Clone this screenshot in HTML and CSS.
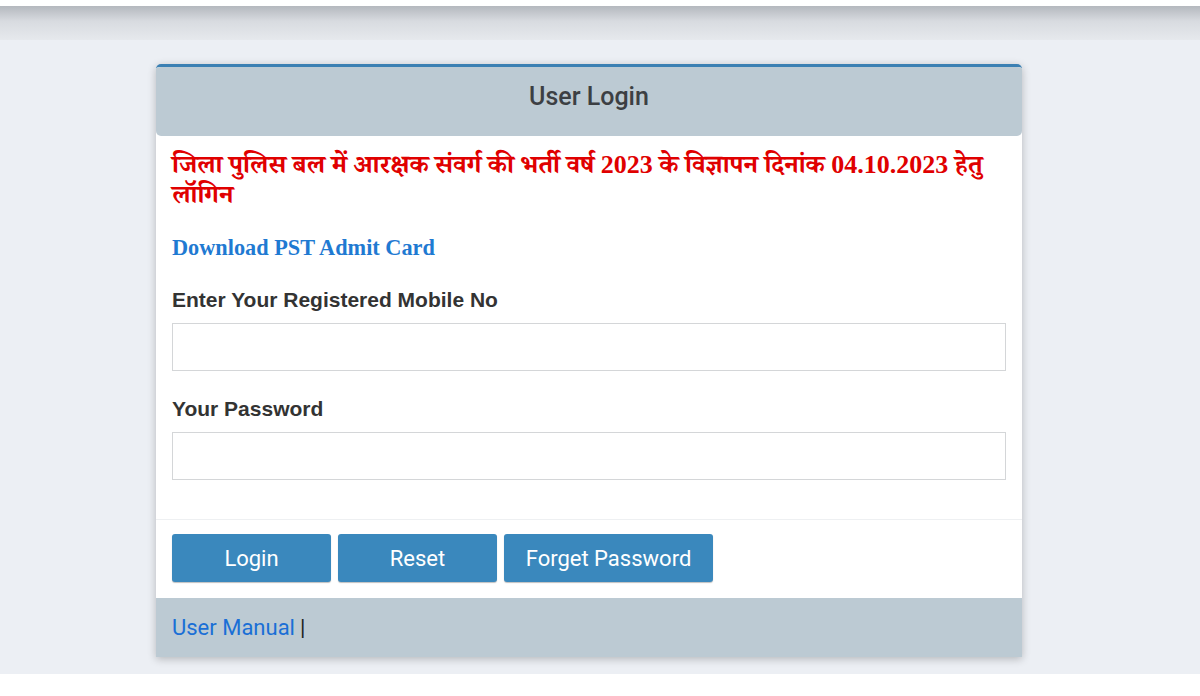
FILE: index.html
```html
<!DOCTYPE html>
<html lang="hi">
<head>
<meta charset="utf-8">
<title>User Login</title>
<link rel="stylesheet" href="styles.css">
</head>
<body>
<div class="page">
  <div class="topbar"></div>
  <div class="shade"></div>
  <div class="wrap">
    <div class="card">
      <div class="card-head">User Login</div>
      <div class="card-body">
        <h3 class="notice">जिला पुलिस बल में आरक्षक संवर्ग की भर्ती वर्ष 2023 के विज्ञापन दिनांक 04.10.2023 हेतु लॉगिन</h3>
        <a class="admit" href="#">Download PST Admit Card</a>
        <label class="lbl">Enter Your Registered Mobile No</label>
        <input class="field" type="text">
        <label class="lbl">Your Password</label>
        <input class="field" type="password">
      </div>
      <div class="card-actions">
        <button class="btn btn-std">Login</button>
        <button class="btn btn-std">Reset</button>
        <button class="btn btn-wide">Forget Password</button>
      </div>
      <div class="card-foot"><a class="manual" href="#">User Manual</a> |</div>
    </div>
  </div>
</div>
</body>
</html>
```

FILE: styles.css
```css
html, body {
  margin: 0;
  padding: 0;
  background: #ffffff;
}
.page {
  background: #eceff4;
  height: 674px;
  overflow: hidden;
}
.topbar {
  height: 6px;
  background: #ffffff;
}
.shade {
  height: 34px;
  background: linear-gradient(#b4b8be 0%, #d8dbe0 45%, #e6e9ed 100%);
}
.wrap {
  padding-top: 24px;
  padding-left: 156px;
}
.card {
  width: 866px;
  background: #ffffff;
  border-top: 3px solid #3b80b3;
  border-radius: 5px 5px 0 0;
  box-shadow: 0 2px 8px rgba(0, 0, 0, 0.24);
  overflow: hidden;
}
.card-head {
  box-sizing: border-box;
  height: 69px;
  padding-bottom: 11px;
  background: #bccad3;
  display: flex;
  align-items: center;
  justify-content: center;
  font-family: Roboto, "Liberation Sans", sans-serif;
  font-size: 25px;
  font-weight: 500;
  color: #3c3f43;
  border-radius: 0 0 5px 5px;
}
.card-body {
  padding: 14px 16px 39px 16px;
  border-bottom: 1px solid #eef0f2;
  display: flex;
  flex-direction: column;
  align-items: flex-start;
}
.notice {
  margin: 0;
  font-family: "Liberation Serif", "Noto Serif Devanagari", "Lohit Devanagari", "Noto Sans Devanagari", serif;
  font-size: 26px;
  line-height: 30px;
  font-weight: bold;
  color: #e00000;
}
.admit {
  margin-top: 24px;
  font-family: "Liberation Serif", serif;
  font-size: 22.3px;
  font-weight: bold;
  color: #1f7ad2;
  text-decoration: none;
  line-height: 28px;
}
.lbl {
  margin-top: 24px;
  font-family: "Liberation Sans", Arial, sans-serif;
  font-size: 21px;
  font-weight: bold;
  color: #333333;
  line-height: 28px;
}
.field {
  box-sizing: border-box;
  width: 834px;
  height: 48px;
  margin-top: 9px;
  border: 1px solid #d4d6d8;
  background: #ffffff;
  border-radius: 0;
  padding: 6px 12px;
  font-size: 16px;
  outline: none;
}
.card-actions {
  display: flex;
  gap: 7px;
  padding: 14px 16px 16px 16px;
}
.btn {
  height: 48px;
  border: none;
  border-radius: 3px;
  background: #3a88bd;
  color: #ffffff;
  font-family: Roboto, "Liberation Sans", sans-serif;
  font-size: 22px;
  box-shadow: 0 1px 1px rgba(0, 0, 0, 0.25);
  padding: 0;
}
.btn-std {
  width: 159px;
}
.btn-wide {
  width: 209px;
}
.card-foot {
  height: 59px;
  background: #bccad3;
  display: flex;
  align-items: center;
  padding-left: 16px;
  font-family: Roboto, "Liberation Sans", sans-serif;
  font-size: 22px;
  color: #222222;
}
.manual {
  color: #1a6fd6;
  text-decoration: none;
  margin-right: 5px;
}
```
